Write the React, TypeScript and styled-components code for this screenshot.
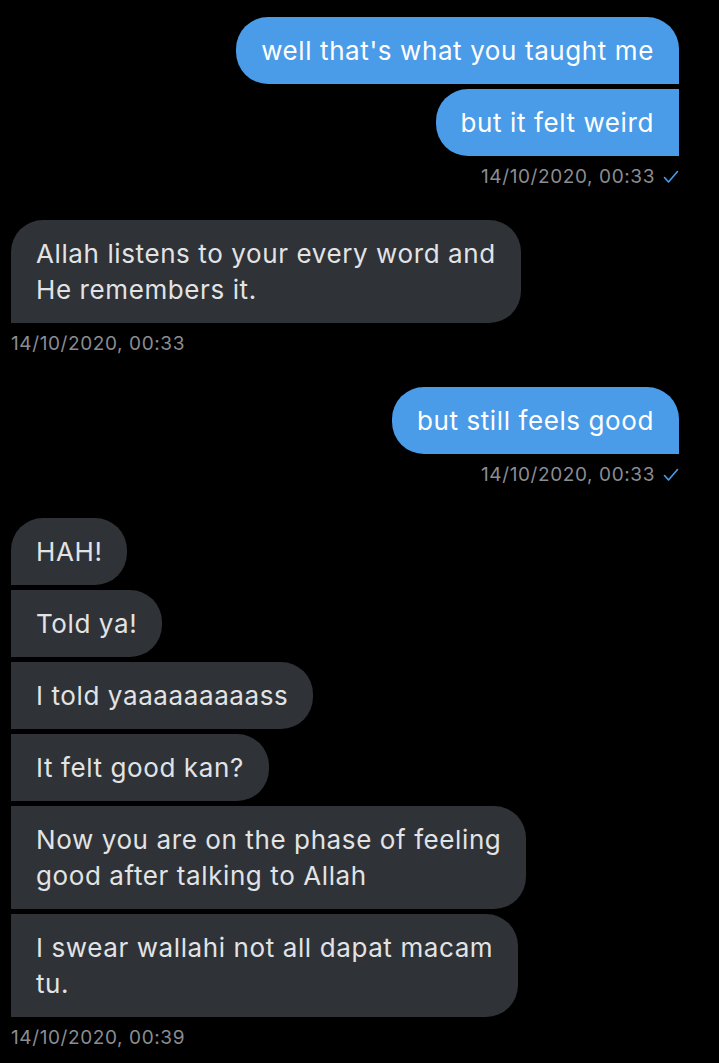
import React from "react";
import styled, { createGlobalStyle, css } from "styled-components";

const Global = createGlobalStyle`
  html, body { margin: 0; padding: 0; background: #000; }
  body { font-family: Inter, "Noto Sans", sans-serif; -webkit-font-smoothing: antialiased; }
`;

const Page = styled.div`
  width: 719px;
  height: 1063px;
  box-sizing: border-box;
  background: #000;
  padding: 17px 40px 0 11px;
  display: flex;
  flex-direction: column;
  gap: 31px;
  overflow: hidden;
`;

const Group = styled.div<{ $sent?: boolean }>`
  display: flex;
  flex-direction: column;
  gap: 5px;
  align-items: ${(p) => (p.$sent ? "flex-end" : "flex-start")};
`;

const Bubble = styled.div<{ $sent?: boolean; $first?: boolean }>`
  box-sizing: border-box;
  padding: 16px 25px 15px;
  font-size: 26px;
  line-height: 36px;
  letter-spacing: 0.6px;
  white-space: pre-line;
  border-radius: 32px;
  ${(p) =>
    p.$sent
      ? css`
          background: #4a9be8;
          color: #ffffff;
          border-bottom-right-radius: 0;
          ${!p.$first && "border-top-right-radius: 0;"}
        `
      : css`
          background: #2f3236;
          color: #e2e3e5;
          border-bottom-left-radius: 0;
          ${!p.$first && "border-top-left-radius: 0;"}
        `}
`;

const Stamp = styled.div`
  margin-top: 4px;
  display: flex;
  align-items: center;
  gap: 8px;
  font-size: 19px;
  line-height: 24px;
  letter-spacing: 0.6px;
  color: #8a8d91;
`;

const Check = () => (
  <svg width="16" height="14" viewBox="0 0 16 14" fill="none">
    <path d="M1.5 7.5 L5.5 12 L14.5 1.5" stroke="#4a9be8" strokeWidth="1.6" strokeLinecap="round" strokeLinejoin="round" />
  </svg>
);

type Msg = { sent: boolean; lines: string[]; time: string };

const groups: Msg[] = [
  { sent: true, lines: ["well that's what you taught me", "but it felt weird"], time: "14/10/2020, 00:33" },
  { sent: false, lines: ["Allah listens to your every word and\nHe remembers it."], time: "14/10/2020, 00:33" },
  { sent: true, lines: ["but still feels good"], time: "14/10/2020, 00:33" },
  {
    sent: false,
    lines: [
      "HAH!",
      "Told ya!",
      "I told yaaaaaaaaass",
      "It felt good kan?",
      "Now you are on the phase of feeling\ngood after talking to Allah",
      "I swear wallahi not all dapat macam\ntu.",
    ],
    time: "14/10/2020, 00:39",
  },
];

export default function App() {
  return (
    <>
      <Global />
      <Page>
        {groups.map((g, i) => (
          <Group key={i} $sent={g.sent}>
            {g.lines.map((l, j) => (
              <Bubble key={j} $sent={g.sent} $first={j === 0}>
                {l}
              </Bubble>
            ))}
            <Stamp>
              {g.time}
              {g.sent && <Check />}
            </Stamp>
          </Group>
        ))}
      </Page>
    </>
  );
}
